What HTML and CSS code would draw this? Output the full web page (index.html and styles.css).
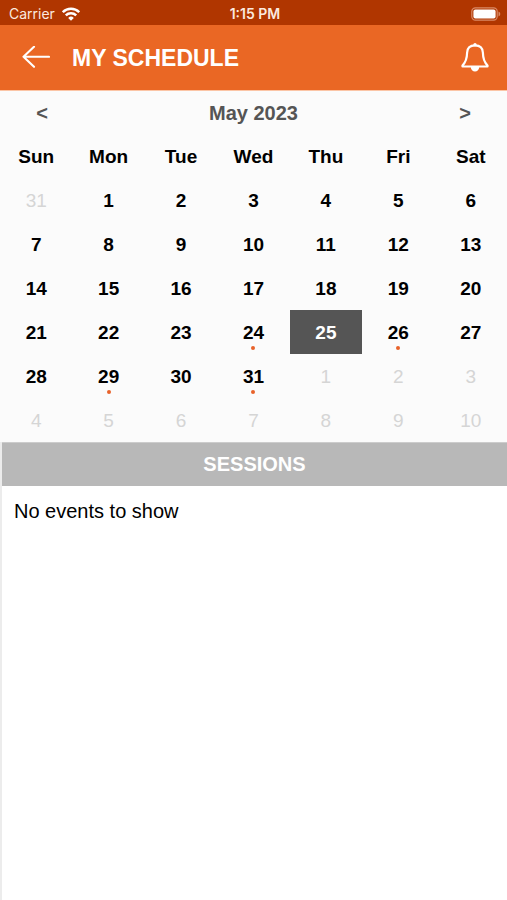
FILE: index.html
```html
<!DOCTYPE html>
<html lang="en">
<head>
<meta charset="utf-8">
<meta name="viewport" content="width=device-width, initial-scale=1">
<title>My Schedule</title>
<link rel="stylesheet" href="styles.css">
</head>
<body>
<div class="status">
  <div class="carrier">
    <span>Carrier</span>
    <svg width="18" height="14" viewBox="0 0 18 14" fill="none" stroke="currentColor" stroke-width="2.5" aria-hidden="true">
      <path d="M.8 5.2a11.6 11.6 0 0 1 16.4 0"/>
      <path d="M3.8 8.3a7.4 7.4 0 0 1 10.4 0"/>
      <path d="M9 13.7 6.2 10.9a4 4 0 0 1 5.6 0z" fill="currentColor" stroke="none"/>
    </svg>
  </div>
  <time class="clock">1:15 PM</time>
  <div class="battery">
    <svg width="30" height="14" viewBox="0 0 30 14" aria-hidden="true">
      <rect x=".8" y=".8" width="25.4" height="12.4" rx="3.6" fill="none" stroke="#d98a66" stroke-width="1.2"/>
      <rect x="2.4" y="2.4" width="22.2" height="9.2" rx="2" fill="#fff"/>
      <path d="M27.5 4.6q1.8.8 1.8 2.4t-1.8 2.4z" fill="#d98a66"/>
    </svg>
  </div>
</div>
<header class="header">
  <button type="button" aria-label="Back">
    <svg width="28" height="24" viewBox="0 0 28 24" fill="none" stroke="currentColor" stroke-width="2.1" stroke-linecap="round" stroke-linejoin="round">
      <path d="M12 .8 1.5 10.8 12 20.800M1.500 10.800H27"/>
    </svg>
  </button>
  <h1>MY SCHEDULE</h1>
  <button type="button" aria-label="Notifications">
    <svg width="28" height="30" viewBox="0 0 28 30" fill="none" stroke="currentColor" stroke-width="2.2" stroke-linejoin="round">
      <path d="M14 2.300C9 2.300 6.200 5.300 6.100 9.800 6 16 5 19 1.500 22.500V23.500h25v-1C23 19 22 16 21.900 9.800 21.800 5.300 19 2.300 14 2.300z"/>
      <path d="M9.800 24.100h8.400a4.200 4.400 0 0 1-8.400 0z" fill="currentColor" stroke="none"/>
      <circle cx="14" cy="1.700" r="1.700" fill="currentColor" stroke="none"/>
    </svg>
  </button>
</header>
<main>
  <section class="calendar" aria-label="Calendar">
    <div class="month">
      <button type="button" aria-label="Previous month">&lt;</button>
      <h2>May 2023</h2>
      <button type="button" aria-label="Next month">&gt;</button>
    </div>
    <table>
      <thead><tr><th>Sun</th><th>Mon</th><th>Tue</th><th>Wed</th><th>Thu</th><th>Fri</th><th>Sat</th></tr></thead>
      <tbody>
        <tr><td><button class="other">31</button></td><td><button>1</button></td><td><button>2</button></td><td><button>3</button></td><td><button>4</button></td><td><button>5</button></td><td><button>6</button></td></tr>
        <tr><td><button>7</button></td><td><button>8</button></td><td><button>9</button></td><td><button>10</button></td><td><button>11</button></td><td><button>12</button></td><td><button>13</button></td></tr>
        <tr><td><button>14</button></td><td><button>15</button></td><td><button>16</button></td><td><button>17</button></td><td><button>18</button></td><td><button>19</button></td><td><button>20</button></td></tr>
        <tr><td><button>21</button></td><td><button>22</button></td><td><button>23</button></td><td><button class="event">24</button></td><td><button class="selected" aria-pressed="true">25</button></td><td><button class="event">26</button></td><td><button>27</button></td></tr>
        <tr><td><button>28</button></td><td><button class="event">29</button></td><td><button>30</button></td><td><button class="event">31</button></td><td><button class="other">1</button></td><td><button class="other">2</button></td><td><button class="other">3</button></td></tr>
        <tr><td><button class="other">4</button></td><td><button class="other">5</button></td><td><button class="other">6</button></td><td><button class="other">7</button></td><td><button class="other">8</button></td><td><button class="other">9</button></td><td><button class="other">10</button></td></tr>
      </tbody>
    </table>
  </section>
  <section class="sessions">
    <h2>SESSIONS</h2>
    <p>No events to show</p>
  </section>
</main>
</body>
</html>
```
FILE: styles.css
```css
* {
  box-sizing: border-box;
}

body {
  margin: 0;
  min-height: 100vh;
  display: flex;
  flex-direction: column;
  background: #fff;
  color: #000;
  font-family: "Liberation Sans", Arial, sans-serif;
  font-size: 20px;
}

h1, h2, p {
  margin: 0;
}

button {
  margin: 0;
  padding: 0;
  border: 0;
  background: none;
  color: inherit;
  font: inherit;
}

svg {
  display: block;
}

.status {
  display: grid;
  grid-template-columns: 1fr auto 1fr;
  align-items: center;
  height: 25px;
  padding: 2px 6px 0 9px;
  background: #b03600;
  color: #fbe9df;
  font: 14px/20px Inter, sans-serif;
}

.carrier {
  display: flex;
  align-items: center;
  gap: 7px;
}

.carrier svg {
  color: #fff;
}

.clock {
  font-weight: 600;
}

.battery {
  justify-self: end;
}

.header {
  display: flex;
  align-items: center;
  height: 66px;
  padding: 0 18px 0 22px;
  border-bottom: 1px solid #fbc5a6;
  background: #ea6724;
  color: #fff;
}

.header h1 {
  flex: 1;
  margin-left: 22px;
  font-size: 23px;
  line-height: 28px;
}

main {
  flex: 1;
  display: flex;
  flex-direction: column;
}

.calendar {
  background: #fbfbfb;
}

.month {
  display: grid;
  grid-template-columns: 84px 1fr 84px;
  align-items: center;
  height: 43px;
  padding-top: 2px;
  color: #555;
  font-weight: bold;
  text-align: center;
}

.month h2 {
  font-size: 20px;
}

table {
  width: 100%;
  table-layout: fixed;
  border-collapse: collapse;
  font-size: 19px;
  font-weight: bold;
}

th, td {
  height: 44px;
  padding: 0;
  text-align: center;
}

th,
td button {
  padding-top: 2px;
}

td button {
  position: relative;
  display: block;
  width: 100%;
  height: 44px;
}

td .other {
  color: #d5d5d5;
  font-weight: normal;
}

td .selected {
  background: #555;
  color: #fff;
}

.event::after {
  content: "";
  position: absolute;
  left: 50%;
  bottom: 4px;
  width: 4px;
  height: 4px;
  margin-left: -2px;
  border-radius: 50%;
  background: #e8622a;
}

.sessions {
  flex: 1;
  border-left: 2px solid #ececec;
}

.sessions h2 {
  height: 44px;
  border-top: 1px solid #ccc;
  background: #b8b8b8;
  color: #fff;
  font-size: 20px;
  line-height: 42px;
  text-align: center;
}

.sessions p {
  padding: 11px 12px;
  font-size: 20px;
  line-height: 28px;
}
```
